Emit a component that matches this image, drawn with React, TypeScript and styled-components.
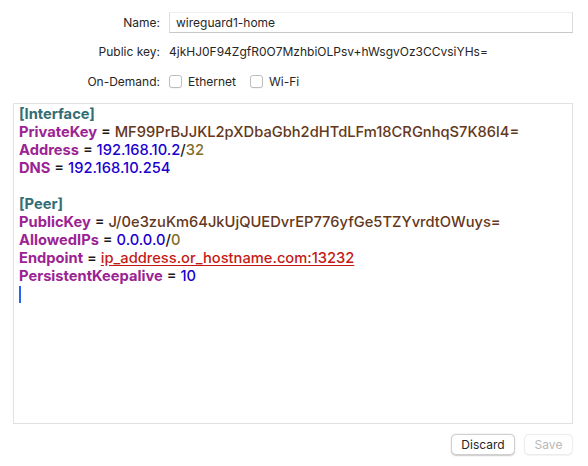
import React from "react";
import styled, { createGlobalStyle } from "styled-components";

const Global = createGlobalStyle`
  html, body { margin: 0; padding: 0; background: #ffffff; }
  body { font-family: "Inter", "Noto Sans", "Liberation Sans", sans-serif; -webkit-font-smoothing: antialiased; }
`;

const Page = styled.div`
  width: 588px;
  height: 466px;
  box-sizing: border-box;
  padding: 12px 15px 0 13px;
  display: flex;
  flex-direction: column;
  background: #fff;
`;

const Form = styled.div`
  display: grid;
  grid-template-columns: 147px 1fr;
  column-gap: 9px;
  align-items: center;
`;

const Label = styled.div<{ $h: number }>`
  height: ${(p) => p.$h}px;
  display: flex;
  align-items: center;
  justify-content: flex-end;
  font-size: 12px;
  color: #262626;
`;

const Value = styled.div<{ $h: number }>`
  height: ${(p) => p.$h}px;
  display: flex;
  align-items: center;
  font-size: 12px;
  color: #262626;
`;

const TextField = styled.div`
  box-sizing: border-box;
  width: 100%;
  height: 21px;
  display: flex;
  align-items: center;
  padding-left: 6px;
  border: 1px solid #dcdcdc;
  border-top-color: #efefef;
  border-bottom-color: #c9c9c9;
  font-size: 12px;
  color: #262626;
`;

const CheckGroup = styled.label`
  display: flex;
  align-items: center;
  gap: 6px;
  margin-right: 14px;
`;

const Box = styled.span`
  box-sizing: border-box;
  width: 13px;
  height: 13px;
  border: 1px solid #bdbdbd;
  border-radius: 3px;
  background: #fff;
  box-shadow: 0 0.5px 0.5px rgba(0, 0, 0, 0.08);
`;

const Editor = styled.div`
  box-sizing: border-box;
  margin-top: 10px;
  width: 560px;
  height: 321px;
  border: 1px solid #e1e1e1;
  padding: 1px 5px;
  font-size: 14.7px;
  line-height: 18px;
  font-weight: 500;
  color: #1a1a1a;
`;

const Line = styled.div`
  height: 18px;
  white-space: pre;
`;

const Section = styled.span`
  color: #326d74;
  font-weight: 700;
`;

const Key = styled.span`
  color: #9b2393;
  font-weight: 700;
`;

const Text = styled.span`
  color: #643820;
`;

const Num = styled.span`
  color: #1c00cf;
`;

const Mask = styled.span`
  color: #836c28;
`;

const Link = styled.span`
  color: #c41a16;
  text-decoration: underline;
  text-underline-offset: 2px;
`;

const Caret = styled.span`
  display: inline-block;
  width: 2px;
  height: 17px;
  background: #2a63f2;
  vertical-align: top;
  margin-top: 1px;
`;

const Footer = styled.div`
  display: flex;
  justify-content: flex-end;
  gap: 9px;
  margin-top: 10px;
`;

const Button = styled.button<{ $disabled?: boolean; $w: number }>`
  box-sizing: border-box;
  width: ${(p) => p.$w}px;
  height: 21px;
  padding: 0;
  font-family: inherit;
  font-size: 12px;
  border-radius: 5px;
  background: #fff;
  border: 0.5px solid ${(p) => (p.$disabled ? "#ececec" : "#d0d0d0")};
  color: ${(p) => (p.$disabled ? "#b8b8b8" : "#262626")};
  box-shadow: ${(p) => (p.$disabled ? "0 0.5px 1px rgba(0,0,0,0.05)" : "0 0.5px 1.5px rgba(0,0,0,0.22)")};
`;

export default function App() {
  return (
    <>
      <Global />
      <Page>
        <Form>
          <Label $h={21}>Name:</Label>
          <Value $h={21}>
            <TextField>wireguard1-home</TextField>
          </Value>
          <Label $h={36}>Public key:</Label>
          <Value $h={36}>4jkHJ0F94ZgfR0O7MzhbiOLPsv+hWsgvOz3CCvsiYHs=</Value>
          <Label $h={24}>On-Demand:</Label>
          <Value $h={24}>
            <CheckGroup>
              <Box />
              Ethernet
            </CheckGroup>
            <CheckGroup>
              <Box />
              Wi-Fi
            </CheckGroup>
          </Value>
        </Form>
        <Editor>
          <Line><Section>[Interface]</Section></Line>
          <Line>
            <Key>PrivateKey</Key> = <Text>MF99PrBJJKL2pXDbaGbh2dHTdLFm18CRGnhqS7K86l4=</Text>
          </Line>
          <Line>
            <Key>Address</Key> = <Num>192.168.10.2</Num>/<Mask>32</Mask>
          </Line>
          <Line>
            <Key>DNS</Key> = <Num>192.168.10.254</Num>
          </Line>
          <Line> </Line>
          <Line><Section>[Peer]</Section></Line>
          <Line>
            <Key>PublicKey</Key> = <Text>J/0e3zuKm64JkUjQUEDvrEP776yfGe5TZYvrdtOWuys=</Text>
          </Line>
          <Line>
            <Key>AllowedIPs</Key> = <Num>0.0.0.0</Num>/<Mask>0</Mask>
          </Line>
          <Line>
            <Key>Endpoint</Key> = <Link>ip_address.or_hostname.com:13232</Link>
          </Line>
          <Line>
            <Key>PersistentKeepalive</Key> = <Num>10</Num>
          </Line>
          <Line><Caret /></Line>
        </Editor>
        <Footer>
          <Button $w={64}>Discard</Button>
          <Button $w={49} $disabled>Save</Button>
        </Footer>
      </Page>
    </>
  );
}
